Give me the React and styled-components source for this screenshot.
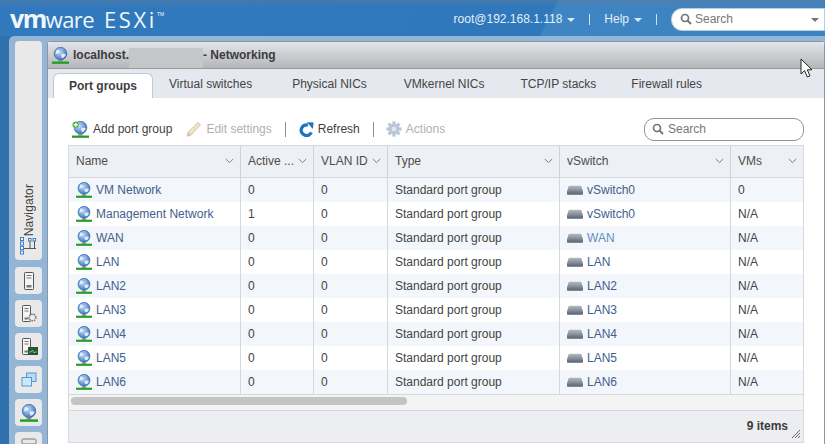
import React from "react";
import styled, { createGlobalStyle } from "styled-components";

const Global = createGlobalStyle`
  html, body { margin: 0; padding: 0; background: #fff; }
  * { box-sizing: border-box; }
  body { font-family: "Liberation Sans", Arial, sans-serif; font-size: 12px; color: #444; }
`;

const Page = styled.div`
  width: 825px; height: 444px; overflow: hidden; display: flex; flex-direction: column;
  position: relative; background: #2f70ad;
`;
const Header = styled.header`
  height: 36px; flex: none; display: flex; align-items: center; color: #e6eff8;
  background:
    linear-gradient(to bottom, rgba(95,125,155,.45) 0, rgba(95,125,155,0) 8px),
    linear-gradient(118deg, #3079bd 0, #2f78bc 66%, #3f85c3 66.4%, #3b82c2 100%);
`;
const Logo = styled.div`
  margin-left: 10px; display: flex; align-items: baseline; color: #f1f6fb; line-height: 1;
`;
const LogoVm = styled.span`font: bold 25px "Open Sans", sans-serif; letter-spacing: -1.5px;`;
const LogoWare = styled.span`font: 22px "Open Sans", sans-serif; letter-spacing: -.6px;`;
const LogoProduct = styled.span`font: 22px "Open Sans", sans-serif; letter-spacing: 2.6px; margin-left: 10px;`;
const LogoTm = styled.sup`font-size: 5px; align-self: flex-start; margin-top: 11px;`;
const HeaderRight = styled.div`margin-left: auto; display: flex; align-items: center; padding-top: 2px;`;
const MenuItem = styled.span`display: inline-flex; align-items: center; gap: 5px; font-size: 12px;`;
const Caret = styled.i`
  display: inline-block; width: 0; height: 0; margin-top: 2px;
  border-left: 4px solid transparent; border-right: 4px solid transparent;
  border-top: 4px solid ${p => p.$color || "#dbe7f3"};
`;
const HeaderSep = styled.span`width: 1px; height: 11px; background: #cfe0f0; margin: 0 14px;`;
const HeaderSearch = styled.div`
  width: 154px; height: 23px; background: #fff; border-radius: 11px 0 0 11px; display: flex;
  align-items: center; padding: 0 5px 0 8px; gap: 3px; color: #777; font-size: 12px;
  border: 1px solid #b8cde0;
`;
const Spacer = styled.span`margin-left: auto; display: inline-flex;`;

const Body = styled.div`flex: 1; min-height: 0; display: flex;`;
const Frame = styled.div`
  flex: 1; margin-left: 9px; display: flex; background: #93b5d6; border-radius: 5px 0 0 0;
`;
const Sidebar = styled.nav`
  width: 38px; flex: none; padding: 5px 0 0 6px; display: flex; flex-direction: column; gap: 6px;
`;
const Navigator = styled.div`
  width: 27px; height: 219px; flex: none; margin-bottom: 1px; background: #e9e9e9; border-radius: 4px;
  display: flex; flex-direction: column; align-items: center; justify-content: flex-end; padding-bottom: 4px;
`;
const NavLabel = styled.span`
  writing-mode: vertical-rl; transform: rotate(180deg); font-size: 12px; color: #3f3f3f; letter-spacing: .1px;
`;
const NavButton = styled.div`
  width: 27px; height: 27px; flex: none; background: #e9e9e9; border-radius: 4px;
  display: flex; align-items: center; justify-content: center;
`;
const Main = styled.main`
  flex: 1; min-width: 0; margin: 5px 1px 0 0; display: flex; flex-direction: column; background: #fff;
  border-left: 1px solid #8b97a3; border-top: 1px solid #8b97a3; border-right: 1px solid #8b97a3; border-radius: 4px 4px 0 0;
`;
const TitleBar = styled.div`
  height: 27px; flex: none; display: flex; align-items: center; padding-left: 4px; gap: 4px;
  background: linear-gradient(#e4e5e9, #b5b6ba); border-bottom: 1px solid #9a9a9e;
  font-weight: bold; font-size: 12px; color: #3c3c3c;
`;
const TitleText = styled.span`display: flex; align-items: center; height: 100%;`;
const Redacted = styled.span`width: 74px; height: 20px; align-self: flex-end; background: #c5c6c8;`;
const TabStrip = styled.div`
  height: 29px; flex: none; background: #e5e8ee; display: flex; align-items: flex-end; padding-left: 5px;
`;
const Tab = styled.div`
  height: ${p => (p.$active ? 25 : 29)}px; padding: ${p => (p.$active ? "0 15px" : "0 16px")}; display: flex; align-items: center;
  margin-left: ${p => p.$gap || 0}px; font-size: 12px; color: ${p => (p.$active ? "#3f3f3f" : "#444")};
  font-weight: ${p => (p.$active ? "bold" : "normal")};
  ${p => p.$active && "background:#fff;border:1px solid #c4c8ce;border-bottom:0;border-radius:6px 6px 0 0;"}
`;
const Content = styled.div`flex: 1; min-height: 0; padding: 0 20px; display: flex; flex-direction: column;`;
const Toolbar = styled.div`height: 47px; flex: none; display: flex; align-items: center; padding: 15px 0 0 4px; position: relative;`;
const ToolButton = styled.span`
  display: inline-flex; align-items: center; gap: 4px; font-size: 12px; color: ${p => (p.$disabled ? "#aeb1b5" : "#3f3f3f")};
  margin-right: ${p => p.$mr ?? 13}px;
`;
const ToolSep = styled.span`width: 1px; height: 15px; background: #8d9196; margin-right: ${p => p.$mr ?? 13}px;`;
const SearchField = styled.div`
  margin-left: auto; width: 160px; height: 23px; border: 1px solid #8e9297; border-radius: 10px;
  display: flex; align-items: center; gap: 4px; padding-left: 7px; color: #777; font-size: 12px;
`;
const Table = styled.div`
  flex: none; width: 736px; border: 1px solid #d5d9dd; display: flex; flex-direction: column;
`;
const grid = "171px 73px 74px 172px 171px 1fr";
const HeadRow = styled.div`
  height: 32px; display: grid; grid-template-columns: ${grid}; background: #edf0f4; border-bottom: 1px solid #d5d9dd; color: #4d4d4d;
`;
const HeadCell = styled.div`
  display: flex; align-items: center; justify-content: space-between; padding: 0 6px 2px 7px; font-size: 12px;
  & + & { border-left: 1px solid #cfd3d8; }
`;
const Row = styled.div`
  height: 24px; display: grid; grid-template-columns: ${grid}; background: ${p => (p.$odd ? "#f3f6fa" : "#fff")}; color: #444;
`;
const Cell = styled.div`
  display: flex; align-items: center; gap: 4px; padding-left: 7px; white-space: nowrap; overflow: hidden;
  & + & { border-left: 1px solid #d5d9dd; }
`;
const CellLink = styled.span`color: ${p => (p.$hover ? "#5b8fbe" : "#41608c")};`;
const ScrollBand = styled.div`
  height: 16px; background: #f4f4f4; border-top: 1px solid #d5d9dd; padding: 2px 0 0 2px;
`;
const ScrollThumb = styled.div`width: 336px; height: 8px; border-radius: 4px; background: #c4c4c4;`;
const Footer = styled.div`
  height: 32px; background: #eceef1; border-top: 1px solid #d5d9dd; display: flex; align-items: center; justify-content: flex-end;
  padding: 0 15px 2px 0; font-weight: bold; font-size: 12px; color: #3c3c3c; position: relative;
`;
const Grip = styled.svg`position: absolute; right: 3px; bottom: 4px;`;
const Cursor = styled.svg`position: absolute; left: 800px; top: 58px;`;

const Globe = ({ size = 18, plus }) => (
  <svg width={size} height={size} viewBox="0 0 18 18" style={{ flex: "none" }}>
    <defs>
      <radialGradient id="gl" cx=".42" cy=".38" r=".7">
        <stop offset="0" stopColor="#c6dcf5" />
        <stop offset=".55" stopColor="#6e9edb" />
        <stop offset="1" stopColor="#2f5ea8" />
      </radialGradient>
    </defs>
    <circle cx="9" cy="7" r="6.7" fill="url(#gl)" stroke="#3f6cad" strokeWidth=".8" />
    <path d="M5 2.8c2.2.3 3.4 1.500 2.800 3-.9 1.100-2.600.8-4.200 2M10 7.600c1.800-.7 3.800-.4 4.600.2-.5 2.300-2 3.700-3.800 4.100-1-1.400-1.400-2.900-.8-4.300z" fill="#eef5fb" opacity=".9" />
    <path d="M7.300 13.400h3.400l1 2H6.300z" fill="#7d8a9c" />
    <rect x="0" y="15.400" width="18" height="2.400" fill="#1f9f1f" />
    {plus && (
      <g>
        <circle cx="4" cy="4" r="3.600" fill="#3ca63c" stroke="#d6f0d6" strokeWidth=".5" />
        <path d="M4 1.800v4.400M1.800 4h4.400" stroke="#fff" strokeWidth="1.400" />
      </g>
    )}
  </svg>
);
const Switch = () => (
  <svg width="16" height="10" viewBox="0 0 16 10" style={{ flex: "none" }}>
    <defs>
      <linearGradient id="sw" x1="0" y1="0" x2="0" y2="1">
        <stop offset="0" stopColor="#b4bac2" />
        <stop offset=".6" stopColor="#7d8793" />
        <stop offset="1" stopColor="#59626e" />
      </linearGradient>
    </defs>
    <path d="M1.500 1.500Q2 .8 3 .8h10q1 0 1.500.7L16 6.500V9q0 .7-.7.7H.700Q0 9.700 0 9V6.500z" fill="url(#sw)" />
  </svg>
);
const Chevron = () => (
  <svg width="9" height="6" viewBox="0 0 9 6" style={{ flex: "none" }}>
    <path d="M.8 1l3.700 3.600L8.200 1" fill="none" stroke="#7a7f85" strokeWidth="1" />
  </svg>
);
const Magnifier = ({ color = "#6f747a" }) => (
  <svg width="12" height="12" viewBox="0 0 12 12" style={{ flex: "none" }}>
    <circle cx="5" cy="5" r="3.500" fill="none" stroke={color} strokeWidth="1.700" />
    <path d="M7.600 7.600L11 11" stroke={color} strokeWidth="2" />
  </svg>
);
const Pencil = () => (
  <svg width="16" height="16" viewBox="0 0 16 16">
    <path d="M11.800 1.500l2.700 2.200L5 14l-4 1.200 1.100-4z" fill="#efe4c8" stroke="#c8bda0" strokeWidth=".8" />
    <path d="M2.100 11.200L5 14l-4 1.200z" fill="#d8c7a0" />
  </svg>
);
const Refresh = () => (
  <svg width="15" height="15" viewBox="0 0 15 15">
    <path d="M12.300 10.400A5.300 5.300 0 1 1 9 3.100" fill="none" stroke="#1a73c4" strokeWidth="3.300" />
    <path d="M8 .3L14.600 .6 13.800 7z" fill="#1a73c4" />
  </svg>
);
const Gear = () => (
  <svg width="16" height="16" viewBox="0 0 16 16">
    <g fill="#b9c7d8">
      <circle cx="8" cy="8" r="5.400" />
      {[0, 45, 90, 135, 180, 225, 270, 315].map(a => (
        <rect key={a} x="6.400" y=".4" width="3.200" height="3.400" transform={`rotate(${a} 8 8)`} />
      ))}
    </g>
    <circle cx="8" cy="8" r="2.300" fill="#e2e8ef" />
  </svg>
);
const TreeIcon = () => (
  <svg width="19" height="20" viewBox="0 0 19 20">
    <g fill="#fff" stroke="#3f7ec0" strokeWidth="1">
      <rect x="1.500" y="1.500" width="3" height="3" /><rect x="1.500" y="6" width="3" height="3" />
      <rect x="1.500" y="10.500" width="3" height="3" /><rect x="1.500" y="15" width="3" height="3" />
      <rect x="9.500" y="2.500" width="2.500" height="2.500" /><rect x="14" y="2.500" width="2.500" height="2.500" />
    </g>
    <path d="M5 12.500h12M11 5v7.500M15.500 5v7.500" stroke="#50565c" fill="none" strokeWidth="1" />
  </svg>
);
const Host = ({ children }) => (
  <svg width="20" height="20" viewBox="0 0 20 20">
    <rect x="3.500" y="1.500" width="8" height="16" rx=".8" fill="#f4f4f4" stroke="#555" strokeWidth="1" />
    <path d="M5.500 4.500h4M5.500 7h4" stroke="#777" />
    <rect x="5.500" y="13.500" width="4" height="2" fill="#777" />
    {children}
  </svg>
);
const HostPlain = () => (
  <svg width="12" height="20" viewBox="0 0 12 20">
    <rect x="1.500" y="1.500" width="9" height="17" rx=".8" fill="#f4f4f4" stroke="#555" strokeWidth="1" />
    <path d="M3.500 4.500h5M3.500 7h5" stroke="#777" />
    <rect x="3.500" y="14" width="5" height="2.500" fill="#777" />
  </svg>
);
const VmsIcon = () => (
  <svg width="16" height="16" viewBox="0 0 16 16">
    <rect x="5.500" y="1" width="9.500" height="8.500" fill="#b6dcf5" stroke="#4d9ad6" />
    <rect x="1" y="5.500" width="9.500" height="8.500" fill="#cfe8f8" stroke="#4d9ad6" />
  </svg>
);
const StorageIcon = () => (
  <svg width="16" height="16" viewBox="0 0 16 16">
    <rect x="1" y="1" width="14" height="14" rx="1.500" fill="#8b8f94" />
    <rect x="1" y="1" width="14" height="5" rx="1.500" fill="#e8e8e8" stroke="#777" />
  </svg>
);

const rows = [
  ["VM Network", "0", "vSwitch0", "0"],
  ["Management Network", "1", "vSwitch0", "N/A"],
  ["WAN", "0", "WAN", "N/A", true],
  ["LAN", "0", "LAN", "N/A"],
  ["LAN2", "0", "LAN2", "N/A"],
  ["LAN3", "0", "LAN3", "N/A"],
  ["LAN4", "0", "LAN4", "N/A"],
  ["LAN5", "0", "LAN5", "N/A"],
  ["LAN6", "0", "LAN6", "N/A"],
];
const heads = ["Name", "Active ...", "VLAN ID", "Type", "vSwitch", "VMs"];
const tabs = [
  ["Virtual switches", 0],
  ["Physical NICs", 8],
  ["VMkernel NICs", 5],
  ["TCP/IP stacks", 4],
  ["Firewall rules", 3],
];

export default function App() {
  return (
    <Page>
      <Global />
      <Header>
        <Logo>
          <LogoVm>vm</LogoVm><LogoWare>ware</LogoWare><LogoProduct>ESXi</LogoProduct><LogoTm>TM</LogoTm>
        </Logo>
        <HeaderRight>
          <MenuItem>root@192.168.1.118 <Caret /></MenuItem>
          <HeaderSep />
          <MenuItem>Help <Caret /></MenuItem>
          <HeaderSep />
          <HeaderSearch>
            <Magnifier />
            Search
            <Spacer><Caret $color="#777" /></Spacer>
          </HeaderSearch>
        </HeaderRight>
      </Header>
      <Body>
        <Frame>
          <Sidebar>
            <Navigator>
              <NavLabel>Navigator</NavLabel>
              <TreeIcon />
            </Navigator>
            <NavButton><HostPlain /></NavButton>
            <NavButton>
              <Host>
                <circle cx="13.500" cy="13.500" r="3.300" fill="#eee" stroke="#777" strokeWidth="1.500" strokeDasharray="1.500 .8" />
              </Host>
            </NavButton>
            <NavButton>
              <Host>
                <rect x="9" y="10" width="10" height="8" fill="#2f4f3a" />
                <path d="M10 15h2l1.500-2 1.500 3 1-1h2" stroke="#4fdc4f" fill="none" />
              </Host>
            </NavButton>
            <NavButton><VmsIcon /></NavButton>
            <NavButton><Globe size={18} /></NavButton>
            <NavButton><StorageIcon /></NavButton>
          </Sidebar>
          <Main>
            <TitleBar>
              <Globe size={17} />
              <TitleText>localhost.<Redacted />- Networking</TitleText>
            </TitleBar>
            <TabStrip>
              <Tab $active>Port groups</Tab>
              {tabs.map(([t, g]) => <Tab key={t} $gap={g}>{t}</Tab>)}
            </TabStrip>
            <Content>
              <Toolbar>
                <ToolButton $mr={14}><Globe size={17} plus />Add port group</ToolButton>
                <ToolButton $disabled><Pencil />Edit settings</ToolButton>
                <ToolSep />
                <ToolButton><Refresh />Refresh</ToolButton>
                <ToolSep $mr={12} />
                <ToolButton $disabled $mr={0}><Gear />Actions</ToolButton>
                <SearchField><Magnifier />Search</SearchField>
              </Toolbar>
              <Table>
                <HeadRow>
                  {heads.map(h => <HeadCell key={h}>{h}<Chevron /></HeadCell>)}
                </HeadRow>
                {rows.map(([name, active, sw, vms, hover], i) => (
                  <Row key={name} $odd={i % 2 === 0}>
                    <Cell><Globe size={16} /><CellLink>{name}</CellLink></Cell>
                    <Cell>{active}</Cell>
                    <Cell>0</Cell>
                    <Cell>Standard port group</Cell>
                    <Cell><Switch /><CellLink $hover={hover}>{sw}</CellLink></Cell>
                    <Cell>{vms}</Cell>
                  </Row>
                ))}
                <ScrollBand><ScrollThumb /></ScrollBand>
                <Footer>
                  9 items
                  <Grip width="8" height="8" viewBox="0 0 8 8">
                    <path d="M8 0L0 8M8 3L3 8M8 6L6 8" stroke="#666" strokeWidth="1" />
                  </Grip>
                </Footer>
              </Table>
            </Content>
          </Main>
        </Frame>
      </Body>
      <Cursor width="13" height="20" viewBox="0 0 13 20">
        <path d="M1 1v15l3.600-3.400L7.300 19l2.700-1.200-2.700-6H12z" fill="#fff" stroke="#222" strokeWidth="1" />
      </Cursor>
    </Page>
  );
}
